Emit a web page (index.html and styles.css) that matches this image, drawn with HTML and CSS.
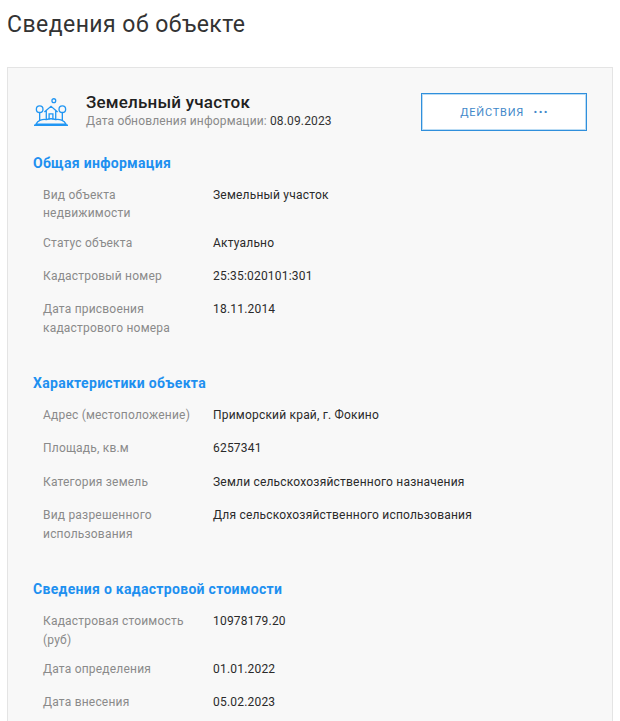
FILE: index.html
```html
<!DOCTYPE html>
<html lang="ru">
<head>
<meta charset="utf-8">
<title>Сведения об объекте</title>
<link rel="stylesheet" href="styles.css">
</head>
<body>
<h1 class="title">Сведения об объекте</h1>
<div class="card">
  <div class="head">
    <svg class="icon" viewBox="0 0 36 30" fill="none" stroke="#2196f3" stroke-width="1.4">
      <circle cx="21" cy="3" r="2"/>
      <circle cx="6" cy="12" r="3.500"/>
      <circle cx="30" cy="12" r="3.500"/>
      <path d="M6 15.500V24M30 15.500V24"/>
      <path d="M11 15l7-6 7 6M13 13.500V23M23 13.500V23M16 23v-6h4v6"/>
      <path d="M2 28c2-4 7-6 11-5 3-1 7-1 10 0 4-1 9 1 11 5zM0 29h36"/>
    </svg>
    <div class="head-text">
      <div class="obj-name">Земельный участок</div>
      <div class="updated">Дата обновления информации: <span class="updated-date">08.09.2023</span></div>
    </div>
    <div class="actions">ДЕЙСТВИЯ<span class="dots">···</span></div>
  </div>

  <h2 class="section first">Общая информация</h2>
  <div class="row"><div class="label">Вид объекта<br>недвижимости</div><div class="value">Земельный участок</div></div>
  <div class="row"><div class="label">Статус объекта</div><div class="value">Актуально</div></div>
  <div class="row"><div class="label">Кадастровый номер</div><div class="value">25:35:020101:301</div></div>
  <div class="row"><div class="label">Дата присвоения<br>кадастрового номера</div><div class="value">18.11.2014</div></div>

  <h2 class="section">Характеристики объекта</h2>
  <div class="row"><div class="label">Адрес (местоположение)</div><div class="value">Приморский край, г. Фокино</div></div>
  <div class="row"><div class="label">Площадь, кв.м</div><div class="value">6257341</div></div>
  <div class="row"><div class="label">Категория земель</div><div class="value">Земли сельскохозяйственного назначения</div></div>
  <div class="row"><div class="label">Вид разрешенного<br>использования</div><div class="value">Для сельскохозяйственного использования</div></div>

  <h2 class="section">Сведения о кадастровой стоимости</h2>
  <div class="row"><div class="label">Кадастровая стоимость<br>(руб)</div><div class="value">10978179.20</div></div>
  <div class="row"><div class="label">Дата определения</div><div class="value">01.01.2022</div></div>
  <div class="row"><div class="label">Дата внесения</div><div class="value">05.02.2023</div></div>
</div>
</body>
</html>
```
FILE: styles.css
```css
html, body {
  margin: 0;
  padding: 0;
  background: #fff;
  height: 721px;
  overflow: hidden;
}
body {
  font-family: Roboto, "Liberation Sans", sans-serif;
  color: #212121;
  padding: 0 7px;
}
.title {
  margin: 0;
  padding-top: 11px;
  font-size: 23px;
  line-height: 28px;
  font-weight: 400;
  letter-spacing: 0.45px;
  color: #333;
}
.card {
  margin-top: 28px;
  width: 606px;
  box-sizing: border-box;
  border: 1px solid #e4e4e4;
  background: #f8f8f8;
  padding: 25px 25px 40px 25px;
}
.head {
  display: flex;
  align-items: center;
  height: 38px;
}
.icon {
  width: 34px;
  height: 30px;
  margin-left: 1px;
  flex: none;
}
.head-text {
  margin-left: 18px;
  flex: 1;
}
.obj-name {
  font-size: 17px;
  line-height: 19px;
  font-weight: 500;
  letter-spacing: 0.2px;
  color: #212121;
  margin-top: -2px;
}
.updated {
  font-size: 12px;
  line-height: 18px;
  letter-spacing: 0.15px;
  color: #8a8a8a;
}
.updated-date {
  color: #333;
}
.actions {
  width: 166px;
  height: 38px;
  box-sizing: border-box;
  border: 1px solid #2f8fdc;
  box-shadow: inset 0 0 0 1px rgba(61, 155, 224, 0.35);
  background: #fff;
  color: #3f88c9;
  font-size: 11px;
  letter-spacing: 0.8px;
  padding-left: 1px;
  display: flex;
  align-items: center;
  justify-content: center;
}
.dots {
  margin-left: 9px;
  font-weight: 700;
  font-size: 14px;
  letter-spacing: 1px;
}
.section {
  margin: 36.8px 0 13.7px;
  font-size: 14px;
  line-height: 18px;
  font-weight: 700;
  letter-spacing: 0.3px;
  color: #1e90f0;
}
.section.first {
  margin-top: 23px;
}
.row {
  display: flex;
  min-height: 22.7px;
  margin-bottom: 10.6px;
  font-size: 12px;
  line-height: 18.7px;
  letter-spacing: 0.2px;
}
.label {
  width: 170px;
  margin-left: 10px;
  color: #8a8a8a;
  flex: none;
}
.value {
  color: #2a2a2a;
}
```
